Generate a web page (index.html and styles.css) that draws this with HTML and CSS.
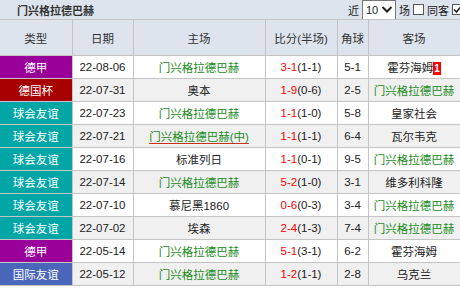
FILE: index.html
```html
<!DOCTYPE html>
<html lang="zh">
<head>
<meta charset="utf-8">
<link rel="stylesheet" href="styles.css">
</head>
<body>
<div class="bar">
  <span class="title">门兴格拉德巴赫</span>
  <div class="ctrl">
    <span class="w">近</span>
    <span class="sel">10<svg width="12" height="9" viewBox="0 0 12 9"><path d="M1.5 2 L6 6.5 L10.5 2" fill="none" stroke="#222" stroke-width="2"/></svg></span>
    <span class="w">场</span>
    <span class="cb"></span>
    <span class="w2">同客</span>
    <span class="cb"><svg width="9" height="9" viewBox="0 0 9 9"><path d="M1 4.5 L3.5 7 L8 1.5" fill="none" stroke="#222" stroke-width="1.6"/></svg></span>
  </div>
</div>
<table class="t">
  <colgroup><col class="c1"><col class="c2"><col class="c3"><col class="c4"><col class="c5"><col class="c6"></colgroup>
  <thead>
    <tr><th>类型</th><th>日期</th><th>主场</th><th>比分(半场)</th><th>角球</th><th>客场</th></tr>
  </thead>
  <tbody>
    <tr><td class="lg bl">德甲</td><td>22-08-06</td><td class="g">门兴格拉德巴赫</td><td><span class="r">3-1</span>(1-1)</td><td>5-1</td><td>霍芬海姆<span class="rc">1</span></td></tr>
    <tr class="alt"><td class="lg cup">德国杯</td><td>22-07-31</td><td>奥本</td><td><span class="r">1-9</span>(0-6)</td><td>2-5</td><td class="g">门兴格拉德巴赫</td></tr>
    <tr><td class="lg fr">球会友谊</td><td>22-07-23</td><td class="g">门兴格拉德巴赫</td><td><span class="r">1-1</span>(1-0)</td><td>5-8</td><td>皇家社会</td></tr>
    <tr class="alt"><td class="lg fr">球会友谊</td><td>22-07-21</td><td class="g"><span class="ul">门兴格拉德巴赫(中)</span></td><td><span class="r">1-1</span>(1-1)</td><td>6-4</td><td>瓦尔韦克</td></tr>
    <tr><td class="lg fr">球会友谊</td><td>22-07-16</td><td>标准列日</td><td><span class="r">1-1</span>(0-1)</td><td>9-5</td><td class="g">门兴格拉德巴赫</td></tr>
    <tr class="alt"><td class="lg fr">球会友谊</td><td>22-07-14</td><td class="g">门兴格拉德巴赫</td><td><span class="r">5-2</span>(1-0)</td><td>3-1</td><td>维多利科隆</td></tr>
    <tr><td class="lg fr">球会友谊</td><td>22-07-10</td><td>慕尼黑1860</td><td><span class="r">0-6</span>(0-3)</td><td>3-4</td><td class="g">门兴格拉德巴赫</td></tr>
    <tr class="alt"><td class="lg fr">球会友谊</td><td>22-07-02</td><td>埃森</td><td><span class="r">2-4</span>(1-3)</td><td>7-4</td><td class="g">门兴格拉德巴赫</td></tr>
    <tr><td class="lg bl">德甲</td><td>22-05-14</td><td class="g">门兴格拉德巴赫</td><td><span class="r">5-1</span>(3-1)</td><td>6-2</td><td>霍芬海姆</td></tr>
    <tr class="alt"><td class="lg intl">国际友谊</td><td>22-05-12</td><td class="g">门兴格拉德巴赫</td><td><span class="r">1-2</span>(1-1)</td><td>2-8</td><td>乌克兰</td></tr>
  </tbody>
</table>
</body>
</html>
```
FILE: styles.css
```css
html, body {
  margin: 0;
  padding: 0;
  background: #fff;
}
body {
  width: 460px;
  overflow: hidden;
  font-family: "Liberation Sans", "Noto Sans CJK SC", sans-serif;
  font-size: 11px;
  color: #222;
}
.bar {
  height: 19px;
  background: #dde4ee;
  display: flex;
  align-items: center;
  padding-left: 17px;
  overflow: hidden;
}
.title {
  flex: 1;
  font-weight: bold;
  color: #333;
  font-size: 11px;
}
.ctrl {
  flex: none;
  display: flex;
  align-items: center;
  gap: 3px;
  margin-right: -3px;
  font-size: 11px;
  color: #222;
}
.w { width: 11px; }
.w2 { width: 22px; }
.sel {
  display: flex;
  align-items: center;
  justify-content: space-between;
  box-sizing: border-box;
  width: 34px;
  height: 20px;
  background: #fff;
  border: 1px solid #767676;
  padding: 0 2px 0 3px;
  font-size: 11px;
}
.cb {
  display: inline-flex;
  align-items: center;
  justify-content: center;
  box-sizing: border-box;
  width: 11px;
  height: 11px;
  background: #fff;
  border: 1px solid #555;
  overflow: hidden;
}
.t {
  width: 460px;
  border-collapse: collapse;
  table-layout: fixed;
}
.c1 { width: 72px; }
.c2 { width: 61px; }
.c3 { width: 132px; }
.c4 { width: 72px; }
.c5 { width: 31px; }
.c6 { width: 92px; }
.t th, .t td {
  border: 1px solid #c4c4c4;
  text-align: center;
  padding: 0;
  white-space: nowrap;
  overflow: hidden;
}
.t th {
  height: 35px;
  background: #dde4ee;
  font-weight: normal;
  color: #333;
  font-size: 11.5px;
}
.t td {
  height: 22px;
  color: #222;
  font-size: 11.5px;
}
.t th:first-child, .t td:first-child { border-left: none; }
.alt td { background: #f0f0f0; }
.t td.lg { color: #fff; }
.t td.bl { background: #990099; }
.t td.cup { background: #a80000; }
.t td.fr { background: #00a6a6; }
.t td.intl { background: #4a66bb; }
.t td.g { color: #1a8c1a; }
.r { color: #f00; }
.ul {
  text-decoration: underline;
  text-decoration-color: #c8301e;
  text-underline-offset: 2px;
}
.rc {
  display: inline-block;
  background: #f00;
  color: #fff;
  font-weight: bold;
  font-size: 10px;
  line-height: 13px;
  padding: 0 1px;
  vertical-align: middle;
}
```
